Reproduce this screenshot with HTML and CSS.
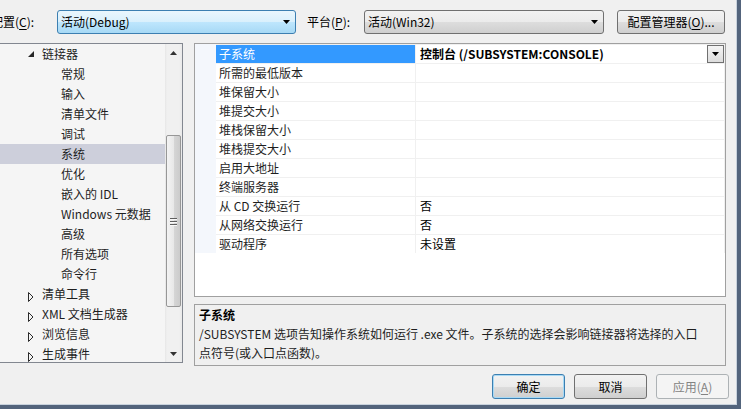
FILE: index.html
```html
<!DOCTYPE html>
<html lang="zh-CN">
<head>
<meta charset="utf-8">
<title>属性页</title>
<link rel="stylesheet" href="styles.css">
</head>
<body>
<div class="window">
  <div class="topbar">
    <label class="lbl lbl-config">配置(<u>C</u>):</label>
    <div class="combo combo-hot"><span>活动(Debug)</span><svg class="caret" width="7" height="4" viewBox="0 0 7 4"><polygon points="0,0 7,0 3.5,4" fill="#000"/></svg></div>
    <label class="lbl lbl-platform">平台(<u>P</u>):</label>
    <div class="combo combo-plat"><span>活动(Win32)</span><svg class="caret" width="7" height="4" viewBox="0 0 7 4"><polygon points="0,0 7,0 3.5,4" fill="#000"/></svg></div>
    <button class="btn btn-mgr">配置管理器(<u>O</u>)...</button>
  </div>

  <div class="main">
    <div class="tree">
      <div class="tree-list">
        <div class="node lvl1"><span class="tw"><svg width="6" height="6" viewBox="0 0 6 6"><polygon points="6,0 6,6 0,6" fill="#262626"/></svg></span>链接器</div>
        <div class="node lvl2">常规</div>
        <div class="node lvl2">输入</div>
        <div class="node lvl2">清单文件</div>
        <div class="node lvl2">调试</div>
        <div class="node lvl2 selected">系统</div>
        <div class="node lvl2">优化</div>
        <div class="node lvl2">嵌入的 IDL</div>
        <div class="node lvl2">Windows 元数据</div>
        <div class="node lvl2">高级</div>
        <div class="node lvl2">所有选项</div>
        <div class="node lvl2">命令行</div>
        <div class="node lvl1"><span class="tw tw-c"><svg width="6" height="10" viewBox="0 0 6 10"><polygon points="0.5,0.5 5,5 0.5,9.5" fill="none" stroke="#2a2a2a" stroke-width="1"/></svg></span>清单工具</div>
        <div class="node lvl1"><span class="tw tw-c"><svg width="6" height="10" viewBox="0 0 6 10"><polygon points="0.5,0.5 5,5 0.5,9.5" fill="none" stroke="#2a2a2a" stroke-width="1"/></svg></span>XML 文档生成器</div>
        <div class="node lvl1"><span class="tw tw-c"><svg width="6" height="10" viewBox="0 0 6 10"><polygon points="0.5,0.5 5,5 0.5,9.5" fill="none" stroke="#2a2a2a" stroke-width="1"/></svg></span>浏览信息</div>
        <div class="node lvl1"><span class="tw tw-c"><svg width="6" height="10" viewBox="0 0 6 10"><polygon points="0.5,0.5 5,5 0.5,9.5" fill="none" stroke="#2a2a2a" stroke-width="1"/></svg></span>生成事件</div>
      </div>
      <div class="vscroll">
        <div class="sarrow"><svg width="7" height="4" viewBox="0 0 7 4"><polygon points="3.5,0 7,4 0,4" fill="#333"/></svg></div>
        <div class="track">
          <div class="thumb"><span class="grip"></span><span class="grip"></span><span class="grip"></span></div>
        </div>
        <div class="sarrow"><svg width="7" height="4" viewBox="0 0 7 4"><polygon points="0,0 7,0 3.5,4" fill="#333"/></svg></div>
      </div>
    </div>

    <div class="right">
      <div class="grid">
        <div class="prow"><span class="gutter"></span><span class="pname sel">子系统</span><span class="pval bold"><span>控制台 (/SUBSYSTEM:CONSOLE)</span><span class="dd"><svg width="7" height="4" viewBox="0 0 7 4"><polygon points="0,0 7,0 3.5,4" fill="#000"/></svg></span></span></div>
        <div class="prow"><span class="gutter"></span><span class="pname">所需的最低版本</span><span class="pval"></span></div>
        <div class="prow"><span class="gutter"></span><span class="pname">堆保留大小</span><span class="pval"></span></div>
        <div class="prow"><span class="gutter"></span><span class="pname">堆提交大小</span><span class="pval"></span></div>
        <div class="prow"><span class="gutter"></span><span class="pname">堆栈保留大小</span><span class="pval"></span></div>
        <div class="prow"><span class="gutter"></span><span class="pname">堆栈提交大小</span><span class="pval"></span></div>
        <div class="prow"><span class="gutter"></span><span class="pname">启用大地址</span><span class="pval"></span></div>
        <div class="prow"><span class="gutter"></span><span class="pname">终端服务器</span><span class="pval"></span></div>
        <div class="prow"><span class="gutter"></span><span class="pname">从 CD 交换运行</span><span class="pval">否</span></div>
        <div class="prow"><span class="gutter"></span><span class="pname">从网络交换运行</span><span class="pval">否</span></div>
        <div class="prow"><span class="gutter"></span><span class="pname">驱动程序</span><span class="pval">未设置</span></div>
      </div>
      <div class="desc">
        <div class="desc-title">子系统</div>
        <div class="desc-text">/SUBSYSTEM 选项告知操作系统如何运行 .exe 文件。子系统的选择会影响链接器将选择的入口<br>点符号(或入口点函数)。</div>
      </div>
    </div>
  </div>

  <div class="buttons">
    <button class="btn btn-dlg btn-default">确定</button>
    <button class="btn btn-dlg">取消</button>
    <button class="btn btn-dlg btn-disabled">应用(<u>A</u>)</button>
  </div>
</div>
</body>
</html>
```
FILE: styles.css
```css
* { box-sizing: border-box; }

body {
  margin: 0;
  font-family: "Noto Sans CJK SC", "Noto Sans", sans-serif;
  font-size: 12px;
  line-height: 16px;
  color: #000;
  background: #f0f0f0;
}

u { text-decoration: underline; text-underline-offset: 2px; }

.window {
  width: 741px;
  height: 409px;
  background: #f0f0f0;
  border-right: 4px solid #53647c;
  border-bottom: 4px solid #53647c;
  box-shadow: inset -1px -1px 0 #c8d2dd;
  display: flex;
  flex-direction: column;
  overflow: hidden;
}

/* top bar */
.topbar {
  display: flex;
  align-items: center;
  height: 24px;
  margin-top: 10px;
}

.lbl { display: block; white-space: nowrap; }
.lbl-config { margin-left: -9px; width: 66px; }
.lbl-platform { margin-left: 11px; width: 57px; }

.combo {
  height: 24px;
  border-radius: 3px;
  display: flex;
  align-items: center;
  justify-content: space-between;
  padding: 0 5px 0 3px;
}
.combo-hot {
  width: 239px;
  border: 1px solid #3c7fb1;
  background: linear-gradient(#eaf6fd 0%, #d9f0fc 50%, #bee6fd 51%, #a7d9f5 100%);
}
.combo-plat {
  width: 240px;
  border: 1px solid #707070;
  background: linear-gradient(#f2f2f2 0%, #ebebeb 50%, #dddddd 51%, #cfcfcf 100%);
}
.caret { display: block; }

.btn {
  font: inherit;
  color: #000;
  border: 1px solid #707070;
  border-radius: 3px;
  background: linear-gradient(#f2f2f2 0%, #ebebeb 50%, #dddddd 51%, #cfcfcf 100%);
  padding: 0;
  margin: 0;
}
.btn-mgr {
  margin-left: 13px;
  width: 108px;
  height: 24px;
}

/* main area */
.main {
  display: flex;
  margin-top: 9px;
  height: 323px;
}

.tree {
  margin-left: -1px;
  width: 184px;
  height: 320px;
  border: 1px solid #828790;
  background: #f5f5f5;
  display: flex;
  overflow: hidden;
}

.tree-list {
  flex: 1;
  overflow: hidden;
}

.node {
  height: 20px;
  line-height: 20px;
  white-space: nowrap;
  color: #1e1e1e;
}
.node.lvl1 { padding-left: 26px; }
.node.lvl2 { padding-left: 61px; }
.node.selected { background: #cdcfdb; }

.tw {
  display: inline-block;
  width: 16px;
  height: 20px;
  vertical-align: top;
  position: relative;
}
.tw svg { display: block; margin: 7px 0 0 2px; }
.tw-c svg { margin: 8px 0 0 2px; }

.vscroll {
  width: 17px;
  display: flex;
  flex-direction: column;
  background: linear-gradient(to right, #e6e6e6 0px, #f0f0f0 2px, #f0f0f0 14px, #e9e9e9 17px);
}
.sarrow {
  height: 17px;
  display: flex;
  align-items: center;
  justify-content: center;
}
.sarrow svg { display: block; }
.track { flex: 1; }
.thumb {
  margin: 74px 1px 0 1px;
  height: 172px;
  border: 1px solid #979797;
  border-radius: 2px;
  background: linear-gradient(to right, #f3f3f3 0%, #e8e8e8 50%, #d6d6d6 51%, #cbcbcb 100%);
  display: flex;
  flex-direction: column;
  align-items: center;
  justify-content: center;
  gap: 2px;
}
.grip {
  display: block;
  width: 7px;
  height: 1px;
  background: #5f5f5f;
  box-shadow: 0 1px 0 #f8f8f8;
}

.right {
  margin-left: 11px;
  width: 532px;
  display: flex;
  flex-direction: column;
}

.grid {
  height: 254px;
  border: 1px solid #a0a0a0;
  background: #fff;
}

.prow {
  display: grid;
  grid-template-columns: 21px 200px 1fr;
  height: 19px;
}
.gutter { background: #f4f7fc; }
.pname, .pval {
  border-top: 1px solid #f0f0f0;
  line-height: 18px;
  padding-left: 3px;
  white-space: nowrap;
}
.pname { border-right: 1px solid #f0f0f0; color: #1e1e1e; }
.pname.sel { background: #3399ff; color: #fff; border-top-color: #f0f0f0; }
.pval {
  padding-left: 4px;
  display: flex;
  justify-content: space-between;
  border-right: 1px solid #f0f0f0;
}
.pval.bold { font-weight: bold; }

.dd {
  width: 17px;
  height: 18px;
  border: 1px solid #707070;
  background: linear-gradient(#f4f4f4, #dcdcdc);
  display: flex;
  align-items: center;
  justify-content: center;
}
.dd svg { display: block; }

.desc {
  margin-top: 7px;
  height: 62px;
  border: 1px solid #a0a0a0;
  padding: 0 4px;
  background: #f0f0f0;
}
.desc-title { font-weight: bold; line-height: 19px; }
.desc-text { line-height: 19px; color: #1e1e1e; }

/* dialog buttons */
.buttons {
  display: flex;
  justify-content: flex-end;
  gap: 9px;
  margin-top: 8px;
  padding-right: 8px;
}
.btn-dlg {
  width: 73px;
  height: 25px;
}
.btn-default {
  border-color: #3c7fb1;
  box-shadow: inset 0 0 0 1px #a7d9f5;
}
.btn-disabled {
  border-color: #adb2b5;
  background: #f4f4f4;
  color: #838383;
}
```
